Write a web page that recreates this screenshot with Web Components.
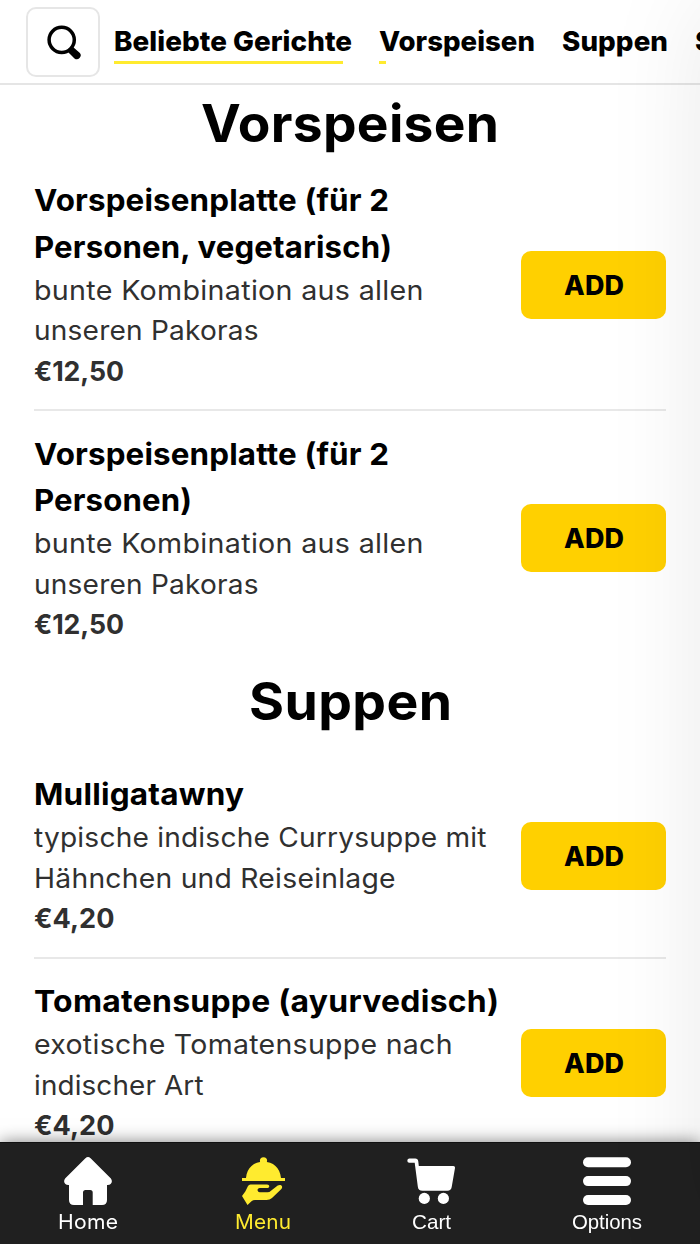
<!DOCTYPE html>
<html lang="de">
<head>
<meta charset="utf-8">
<title>Speisekarte</title>
<style>
html,body{margin:0;height:100%;overflow:hidden;background:#fff}
body{font-family:Inter,"Open Sans",sans-serif;color:#000}
</style>
</head>
<body>
<menu-app></menu-app>
<script>
const define = (name, html, setup) => customElements.define(name, class extends HTMLElement {
  connectedCallback() {
    if (this.shadowRoot) return;
    this.attachShadow({ mode: 'open' }).innerHTML = html;
    if (setup) setup(this, this.shadowRoot);
  }
});

// One line of type that spans its measure: a quarter by tracking, the rest by widening the letters.
define('type-line', `<style>
:host{display:block;white-space:nowrap}
span{display:inline-block;transform-origin:0 50%}
</style><span><slot></slot></span>`, (el, root) => {
  const want = parseFloat(el.getAttribute('measure'));
  const span = root.querySelector('span');
  const natural = span.getBoundingClientRect().width;
  const n = el.textContent.length;
  const gap = (want - natural) * 0.25 / (n - 1);
  span.style.letterSpacing = gap.toFixed(3) + 'px';
  span.style.transform = `scaleX(${(want / (natural + gap * (n - 1))).toFixed(4)})`;
  el.style.width = want + 'px';
});

define('search-button', `<style>
:host{display:flex;flex:none;box-sizing:border-box;width:74px;height:70px;border:2px solid #e6e6e6;border-radius:10px;background:#fff;align-items:center;justify-content:center}
svg{display:block}
</style><svg width="36" height="36" viewBox="0 0 36 36"><circle cx="16.7" cy="15.8" r="12.6" fill="none" stroke="#000" stroke-width="3.5"/><path d="M23.4 25 27.4 22.4 34.9 28.9A3.9 3.9 0 0 1 29.5 34.4L22.5 27.6Z"/></svg>`);

define('category-link', `<style>
:host{display:block;flex:none;height:57px;font-size:27.5px;font-weight:800;line-height:42px}
i{display:block;height:3px;margin-top:-1px;width:var(--progress,0);background:#ffeb2f}
</style><slot></slot><i></i>`);

define('top-bar', `<style>
:host{display:flex;box-sizing:border-box;height:85px;padding:7px 0 0 26px;border-bottom:2px solid #e5e5e5;overflow:hidden;background:#fff}
nav{display:flex;margin:13px 0 0 13.8px;gap:27.2px}
</style><search-button></search-button><nav>
<category-link style="--progress:229px"><type-line measure="238">Beliebte Gerichte</type-line></category-link>
<category-link style="--progress:7px"><type-line measure="156">Vorspeisen</type-line></category-link>
<category-link><type-line measure="106">Suppen</type-line></category-link>
<category-link><type-line measure="88">Salate</type-line></category-link>
</nav>`);

define('menu-section', `<style>
:host{display:block}
h2{display:flex;justify-content:center;margin:0;font-size:52px;font-weight:750;line-height:77px;height:78px}
div{padding:var(--lead,14px) 34px 0}
</style><h2><slot name="heading"></slot></h2><div><slot></slot></div>`);

define('menu-item', `<style>
:host{display:flex;align-items:center;justify-content:space-between;padding-bottom:17.5px}
:host([divided]){border-bottom:2px solid #e8e8e8;margin-bottom:19.5px}
.title{font-size:30.5px;font-weight:650;line-height:46.5px;padding-bottom:.9px}
.desc,.price{font-size:27px;line-height:40.5px;color:#303030}
.price{font-weight:750;margin-bottom:-.9px}
article{width:487px;flex:none}
button{all:unset;box-sizing:border-box;flex:none;display:flex;align-items:center;justify-content:center;width:145px;height:68px;border-radius:10px;background:#ffd000;font-size:26.5px;line-height:32px;font-weight:780;position:relative;top:.6px}
</style><article><div class="title"><slot name="title"></slot></div><div class="desc"><slot name="desc"></slot></div><div class="price"><slot name="price"></slot></div></article><button><type-line measure="60">ADD</type-line></button>`);

define('tab-item', `<style>
:host{display:flex;flex-direction:column;align-items:center;color:#fff;font-size:20.3px;line-height:26px}
:host([active]){color:#ffeb2f}
:host([plain]){font-family:"Liberation Sans",Arial,sans-serif;font-size:20.7px}
div{height:48px;margin:15px 0 4px;display:flex}
</style><div><slot name="icon"></slot></div><slot></slot>`);

define('tab-bar', `<style>
:host{display:grid;grid-template-columns:176.4px 173.6px 162.6px 187.4px;position:fixed;left:0;right:0;bottom:0;height:102px;box-sizing:border-box;background:#202020;box-shadow:inset 0 1px 0 #111,0 0 16px rgba(0,0,0,.5)}
svg{display:block;fill:currentColor}
tab-item:last-of-type{padding-left:1px}
</style>
<tab-item><svg slot="icon" width="48" height="48" viewBox="0 0 48 48"><path d="M21.4 1.2Q24 -1 26.6 1.2L46.9 21.4Q49 24.5 46.6 27Q45.4 28.2 43 28V43Q43 48 38 48H28.7V35.5Q28.7 33 26.2 33H21.5Q19 33 19 35.5V48H10Q5 48 5 43V28Q2.6 28.2 1.4 27Q-1 24.5 1.1 21.4Z"/></svg><type-line measure="60">Home</type-line></tab-item>
<tab-item active><svg slot="icon" width="43" height="48" viewBox="0 0 43 48"><circle cx="21.5" cy="3.8" r="3.6"/><path d="M4 21C5 10.5 12 4.8 21.5 4.8S38 10.5 39 21H43V24H0V21Z"/><path d="M8.5 27.4H25C28 27.5 28 31 25 31H17.8C14.8 31 14.8 35.2 17.8 35.2H25.5Q27.5 35.2 29 33.7L35.7 28.6C38.8 26.8 41.6 29.4 39.4 32L30 41Q27.8 43 24.5 43H13Q11 43 9.5 44.2L5.5 48L0 39L3.3 34.6L6 29Q6.8 27.5 8.5 27.4Z"/></svg><type-line measure="56">Menu</type-line></tab-item>
<tab-item plain><svg slot="icon" width="48" height="48" viewBox="0 0 48 48"><path d="M2.4 1.6H8.2Q11 1.6 11.3 4.5L11.8 9H46Q48.2 9 48 11L44.7 30Q44 33.8 40.5 33.8H15.5Q11.2 33.8 10.8 29.5L7.7 5.7H2.4C-.3 5.7-.3 1.6 2.4 1.6Z"/><circle cx="17.3" cy="41.4" r="5.6"/><circle cx="36.4" cy="41.4" r="5.6"/></svg><type-line measure="39">Cart</type-line></tab-item>
<tab-item plain><svg slot="icon" width="48" height="48" viewBox="0 0 48 48"><rect y=".2" width="48" height="10" rx="5"/><rect y="19.1" width="48" height="10" rx="5"/><rect y="38" width="48" height="10" rx="5"/></svg><type-line measure="70">Options</type-line></tab-item>`);

// Closed side drawer: only its shadow reaches into the page.
define('side-drawer', `<style>
:host{display:block;position:fixed;left:100%;top:0;width:300px;height:100%;box-shadow:0 0 100px rgba(0,0,0,.085);pointer-events:none}
</style>`);

define('menu-app', `<style>
:host{display:block;height:100vh;overflow:hidden}
</style>
<top-bar></top-bar>
<menu-section>
<type-line slot="heading" measure="298">Vorspeisen</type-line>
<menu-item divided>
<type-line slot="title" measure="355">Vorspeisenplatte (für 2</type-line>
<type-line slot="title" measure="358">Personen, vegetarisch)</type-line>
<type-line slot="desc" measure="389.5">bunte Kombination aus allen</type-line>
<type-line slot="desc" measure="224.5">unseren Pakoras</type-line>
<type-line slot="price" measure="90">€12,50</type-line>
</menu-item>
<menu-item>
<type-line slot="title" measure="355">Vorspeisenplatte (für 2</type-line>
<type-line slot="title" measure="158">Personen)</type-line>
<type-line slot="desc" measure="389.5">bunte Kombination aus allen</type-line>
<type-line slot="desc" measure="224.5">unseren Pakoras</type-line>
<type-line slot="price" measure="90">€12,50</type-line>
</menu-item>
</menu-section>
<menu-section style="--lead:30.5px">
<type-line slot="heading" measure="203">Suppen</type-line>
<menu-item divided>
<type-line slot="title" measure="210">Mulligatawny</type-line>
<type-line slot="desc" measure="452.5">typische indische Currysuppe mit</type-line>
<type-line slot="desc" measure="361.5">Hähnchen und Reiseinlage</type-line>
<type-line slot="price" measure="80.5">€4,20</type-line>
</menu-item>
<menu-item>
<type-line slot="title" measure="465">Tomatensuppe (ayurvedisch)</type-line>
<type-line slot="desc" measure="418.5">exotische Tomatensuppe nach</type-line>
<type-line slot="desc" measure="169.5">indischer Art</type-line>
<type-line slot="price" measure="80.5">€4,20</type-line>
</menu-item>
</menu-section>
<tab-bar></tab-bar>
<side-drawer></side-drawer>`);
</script>
</body>
</html>
